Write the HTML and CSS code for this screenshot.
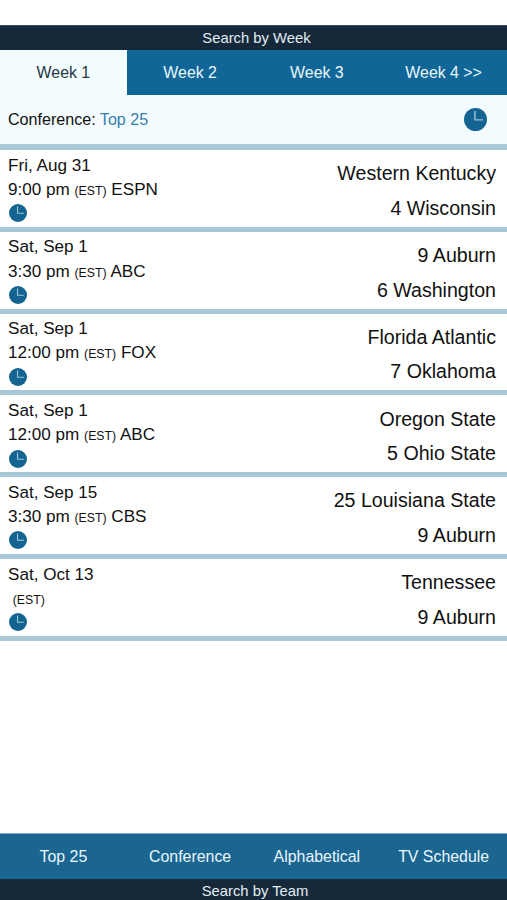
FILE: index.html
```html
<!DOCTYPE html>
<html lang="en">
<head>
<meta charset="utf-8">
<title>Search by Week</title>
<link rel="stylesheet" href="styles.css">
</head>
<body>
<svg class="defs" width="0" height="0" aria-hidden="true"><symbol id="clock" viewBox="0 0 24 24"><circle cx="12" cy="12" r="12" fill="#146491"/><path d="M11.4 3.2v9.2h8.4" fill="none" stroke="#9cc4da" stroke-width="1.5"/></symbol></svg>
<div class="app">
<header>
<h1 class="bar">Search by Week</h1>
<nav class="tabs"><a class="active">Week 1</a><a>Week 2</a><a>Week 3</a><a>Week 4 &gt;&gt;</a></nav>
<div class="filter"><span>Conference: <a>Top 25</a></span><svg class="clock"><use href="#clock"/></svg></div>
</header>
<main>
<article><div class="when"><p>Fri, Aug 31</p><p>9:00 pm <small>(EST)</small> ESPN</p><svg class="clock"><use href="#clock"/></svg></div><div class="teams"><p>Western Kentucky</p><p>4 Wisconsin</p></div></article>
<article><div class="when"><p>Sat, Sep 1</p><p>3:30 pm <small>(EST)</small> ABC</p><svg class="clock"><use href="#clock"/></svg></div><div class="teams"><p>9 Auburn</p><p>6 Washington</p></div></article>
<article><div class="when"><p>Sat, Sep 1</p><p>12:00 pm <small>(EST)</small> FOX</p><svg class="clock"><use href="#clock"/></svg></div><div class="teams"><p>Florida Atlantic</p><p>7 Oklahoma</p></div></article>
<article><div class="when"><p>Sat, Sep 1</p><p>12:00 pm <small>(EST)</small> ABC</p><svg class="clock"><use href="#clock"/></svg></div><div class="teams"><p>Oregon State</p><p>5 Ohio State</p></div></article>
<article><div class="when"><p>Sat, Sep 15</p><p>3:30 pm <small>(EST)</small> CBS</p><svg class="clock"><use href="#clock"/></svg></div><div class="teams"><p>25 Louisiana State</p><p>9 Auburn</p></div></article>
<article><div class="when"><p>Sat, Oct 13</p><p>&nbsp;<small>(EST)</small></p><svg class="clock"><use href="#clock"/></svg></div><div class="teams"><p>Tennessee</p><p>9 Auburn</p></div></article>
</main>
<footer>
<nav class="tabs bottom"><a>Top 25</a><a>Conference</a><a>Alphabetical</a><a>TV Schedule</a></nav>
<h2 class="bar">Search by Team</h2>
</footer>
</div>
</body>
</html>
```
FILE: styles.css
```css
* { box-sizing: border-box; }
body { margin: 0; background: #fff; color: #111; font: 17.1px/24px "Liberation Sans", Arial, sans-serif; }
p, h1, h2 { margin: 0; }
.defs { position: absolute; }
.app { height: 900px; padding-top: 25px; display: flex; flex-direction: column; }
.bar { height: 25px; border-top: 1px solid #3c4c5a; background: #15293b; color: #e2edf3; font-size: 14.8px; font-weight: 400; line-height: 24px; text-align: center; padding-left: 6px; }
.tabs { display: grid; grid-template-columns: repeat(4, 1fr); height: 45px; background: #106696; color: #e9f6fc; font-size: 15.9px; line-height: 45px; text-align: center; }
.tabs .active { background: #f3fcff; color: #273642; }
.filter { display: flex; align-items: center; justify-content: space-between; height: 49px; padding: 0 20px 0 8px; background: #f3fbff; font-size: 16.1px; line-height: 22px; }
.filter span { padding-bottom: 2px; }
.filter a { color: #3480ac; }
.filter .clock { width: 23px; height: 23px; }
main { flex: 1; border-top: 6px solid #a9c8d7; }
article { display: flex; justify-content: space-between; height: 81.8px; padding: 3.6px 11px 0 8px; border-bottom: 5px solid #a9c8d7; white-space: nowrap; }
.when p { height: 24.2px; }
.when small { font-size: 12.3px; }
.when .clock { display: block; width: 18px; height: 18px; margin: 2.2px 0 0 1px; }
.teams { padding-top: 2.6px; font-size: 19.6px; line-height: 34.6px; text-align: right; }
.bottom { height: 46px; border-top: 1px solid #79a9c4; background: #1a6691; }
footer .bar { height: 21px; border: 0; line-height: 24px; padding-left: 3px; overflow: hidden; }
```
